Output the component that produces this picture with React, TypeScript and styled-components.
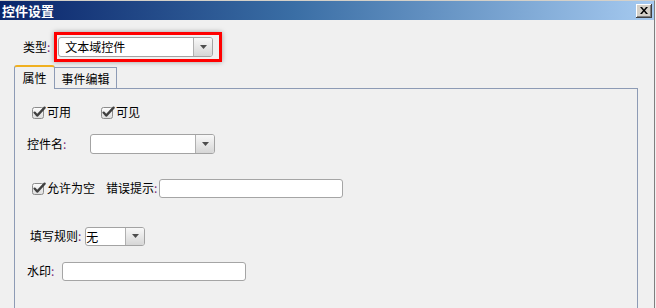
import React from "react";
import styled, { createGlobalStyle } from "styled-components";

const Global = createGlobalStyle`
  html, body { margin: 0; padding: 0; background: #f0f0f0; overflow: hidden; }
  body {
    font-family: "Noto Sans CJK SC", "Liberation Sans", sans-serif;
    font-size: 12px;
    color: #000;
  }
`;

const Window = styled.div`
  width: 655px;
  height: 308px;
  box-sizing: border-box;
  border-top: 1px solid #d4d0c8;
  border-right: 1px solid #7f7f7f;
  background: #f0f0f0;
  display: flex;
  flex-direction: column;
  overflow: hidden;
`;

const TitleBar = styled.div`
  height: 19px;
  flex: none;
  background: linear-gradient(to right, #0a246a 0%, #3a6ea5 45%, #a6caf0 100%);
  display: flex;
  align-items: center;
  justify-content: space-between;
  padding: 0 2px;
`;

const Title = styled.span`
  color: #fff;
  font-weight: bold;
  font-size: 13px;
  line-height: 19px;
`;

const CloseButton = styled.div`
  width: 16px;
  height: 14px;
  background: #d4d0c8;
  box-shadow: inset -1px -1px #404040, inset 1px 1px #ffffff,
    inset -2px -2px #808080, inset 2px 2px #d4d0c8;
  display: flex;
  align-items: center;
  justify-content: center;
`;

const TypeRow = styled.div`
  display: flex;
  align-items: center;
  gap: 4px;
  height: 30px;
  margin: 12px 0 0 23px;
`;

const Label = styled.span<{ $width?: number; $ml?: number }>`
  white-space: nowrap;
  line-height: 20px;
  margin-left: ${(p) => p.$ml ?? 0}px;
  ${(p) => (p.$width ? `width: ${p.$width}px; flex: none;` : "")}
`;

const Colon = styled.span`
  color: #7b2d7b;
`;

const Highlight = styled.div`
  display: flex;
  padding: 2px 6px 2px 1px;
  border: 3px solid #ff0000;
  box-shadow: 0 0 5px rgba(0, 0, 0, 0.35);
`;

const Combo = styled.div<{ $width: number; $height?: number }>`
  width: ${(p) => p.$width}px;
  height: ${(p) => p.$height ?? 20}px;
  box-sizing: border-box;
  border: 1px solid #a3a3a3;
  border-radius: 3px;
  background: #fff;
  display: flex;
  overflow: hidden;
  flex: none;
`;

const ComboText = styled.span<{ $pad: number }>`
  flex: 1;
  padding-left: ${(p) => p.$pad}px;
  line-height: 18px;
  white-space: nowrap;
`;

const ComboButton = styled.span`
  width: 18px;
  border-left: 1px solid #b0b0b0;
  background: linear-gradient(to bottom, #f8f8f8, #d6d6d6);
  display: flex;
  align-items: center;
  justify-content: center;
`;

const TextInput = styled.div<{ $width: number; $ml?: number }>`
  width: ${(p) => p.$width}px;
  height: 19px;
  margin-left: ${(p) => p.$ml ?? 0}px;
  box-sizing: border-box;
  border: 1px solid #a5a5a5;
  border-radius: 3px;
  background: #fff;
  flex: none;
`;

const TabStrip = styled.div`
  display: flex;
  align-items: flex-end;
  margin: 3px 0 0 14px;
  height: 23px;
`;

const Tab = styled.div<{ $active?: boolean }>`
  box-sizing: border-box;
  display: flex;
  align-items: center;
  justify-content: center;
  background: #f0f0f0;
  border: 1px solid #8d9bb5;
  white-space: nowrap;
  ${(p) =>
    p.$active
      ? `
    width: 41px;
    height: 24px;
    margin-bottom: -1px;
    border-bottom: none;
    border-top: 2px solid #f0b020;
    border-radius: 3px 3px 0 0;
    position: relative;
    z-index: 1;
    padding-bottom: 2px;
  `
      : `
    width: 63px;
    height: 21px;
    margin-left: -1px;
    border-bottom: none;
    padding-top: 1px;
  `}
`;

const Panel = styled.div`
  flex: 1;
  width: 624px;
  box-sizing: border-box;
  margin-left: 14px;
  border: 1px solid #8d9bb5;
  border-bottom: none;
  display: flex;
  flex-direction: column;
`;

const Row = styled.div<{ $top: number; $left: number; $gap?: number }>`
  display: flex;
  align-items: center;
  height: 20px;
  margin-top: ${(p) => p.$top}px;
  padding-left: ${(p) => p.$left}px;
  gap: ${(p) => p.$gap ?? 0}px;
`;

const CheckItem = styled.label`
  display: inline-flex;
  align-items: center;
  gap: 1px;
  white-space: nowrap;
  line-height: 20px;
`;

const Arrow = () => (
  <svg width="7" height="4" viewBox="0 0 7 4">
    <path d="M0 0 H7 L3.5 4 Z" fill="#4d4d4d" />
  </svg>
);

const CheckIcon = () => (
  <svg width="14" height="13" viewBox="0 0 14 13">
    <defs>
      <linearGradient id="cbg" x1="0" y1="0" x2="0" y2="1">
        <stop offset="0" stopColor="#fdfdfd" />
        <stop offset="1" stopColor="#dcdcdc" />
      </linearGradient>
    </defs>
    <rect x="0.5" y="1.5" width="11" height="11" rx="2" fill="url(#cbg)" stroke="#8c8c8c" />
    <path d="M2.6 6.6 L5.2 9.6 L12.6 1.6" fill="none" stroke="#3f3f3f" strokeWidth="2.3" strokeLinecap="round" strokeLinejoin="round" />
  </svg>
);

const CloseX = () => (
  <svg width="8" height="7" viewBox="0 0 8 7">
    <path d="M0 0 H2 L4 2.5 L6 0 H8 L5 3.5 L8 7 H6 L4 4.5 L2 7 H0 L3 3.5 Z" fill="#000" />
  </svg>
);

const Check = ({ text }: { text: string }) => (
  <CheckItem>
    <CheckIcon />
    <span>{text}</span>
  </CheckItem>
);

const FieldLabel = ({ text, width, ml }: { text: string; width?: number; ml?: number }) => (
  <Label $width={width} $ml={ml}>
    {text}
    <Colon>:</Colon>
  </Label>
);

export default function App() {
  return (
    <>
      <Global />
      <Window>
        <TitleBar>
          <Title>控件设置</Title>
          <CloseButton>
            <CloseX />
          </CloseButton>
        </TitleBar>

        <TypeRow>
          <FieldLabel text="类型" />
          <Highlight>
            <Combo $width={155}>
              <ComboText $pad={6}>文本域控件</ComboText>
              <ComboButton>
                <Arrow />
              </ComboButton>
            </Combo>
          </Highlight>
        </TypeRow>

        <TabStrip>
          <Tab $active>属性</Tab>
          <Tab>事件编辑</Tab>
        </TabStrip>

        <Panel>
          <Row $top={13} $left={17} $gap={30}>
            <Check text="可用" />
            <Check text="可见" />
          </Row>

          <Row $top={12} $left={12}>
            <FieldLabel text="控件名" width={63} />
            <Combo $width={125}>
              <ComboText $pad={4}></ComboText>
              <ComboButton>
                <Arrow />
              </ComboButton>
            </Combo>
          </Row>

          <Row $top={24} $left={17}>
            <Check text="允许为空" />
            <FieldLabel text="错误提示" ml={11} />
            <TextInput $width={184} $ml={2} />
          </Row>

          <Row $top={28} $left={15} $gap={4}>
            <FieldLabel text="填写规则" />
            <Combo $width={60} $height={19}>
              <ComboText $pad={0}>无</ComboText>
              <ComboButton>
                <Arrow />
              </ComboButton>
            </Combo>
          </Row>

          <Row $top={15} $left={12} $gap={8}>
            <FieldLabel text="水印" />
            <TextInput $width={184} />
          </Row>
        </Panel>
      </Window>
    </>
  );
}
